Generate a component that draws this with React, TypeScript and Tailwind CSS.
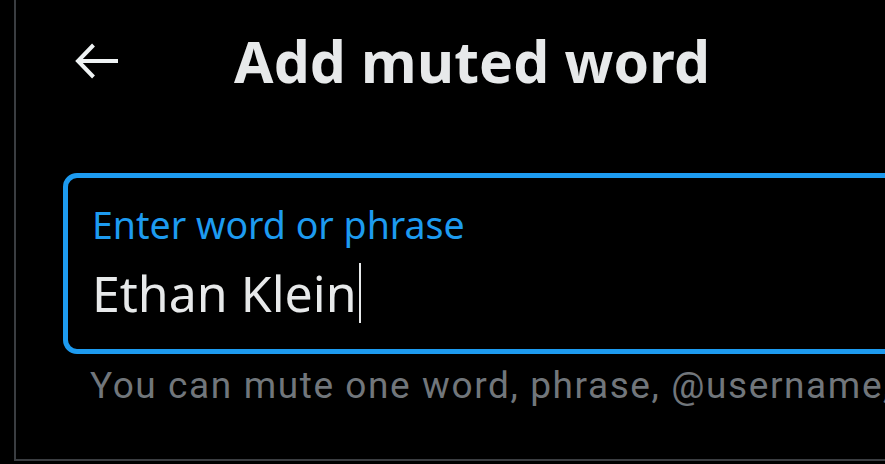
import React from "react";

const BackArrow: React.FC = () => (
  <svg width="46" height="38" viewBox="0 0 46 38" fill="none" className="shrink-0">
    <path
      d="M44 19H4.5M19.5 3L4 19L19.5 35"
      stroke="#eff3f4"
      strokeWidth="4"
      strokeLinecap="butt"
      strokeLinejoin="miter"
    />
  </svg>
);

const App: React.FC = () => {
  return (
    <div className="w-[885px] h-[464px] bg-black overflow-hidden">
      <div className="ml-[14px] w-[920px] h-[461px] border-l-2 border-b-2 border-[#3a3d41] flex flex-col">
        {/* Header */}
        <div className="h-[122px] flex items-center pl-[58px]">
          <BackArrow />
          <h1
            className="ml-[114px] text-[57px] leading-none font-bold text-[#e7e9ea] tracking-[0.2px]"
            style={{ fontFamily: '"Noto Sans", "Open Sans", sans-serif' }}
          >
            Add muted word
          </h1>
        </div>

        {/* Input */}
        <div className="mt-[51px] ml-[47px] w-[860px] h-[181px] border-[5px] border-[#1d9bf0] rounded-[14px] pl-[24px] pt-[25px]">
          <div
            className="text-[37.5px] leading-[44px] text-[#1d9bf0]"
            style={{ fontFamily: '"Noto Sans", "Open Sans", sans-serif' }}
          >
            Enter word or phrase
          </div>
          <div className="mt-[16px] h-[60px] flex items-center">
            <span
              className="text-[50px] leading-[60px] text-[#e7e9ea]"
              style={{ fontFamily: '"Noto Sans", "Open Sans", sans-serif' }}
            >
              Ethan Klein
            </span>
            <span className="w-[2px] h-[60px] bg-[#e7e9ea] ml-[2px]" />
          </div>
        </div>

        {/* Helper */}
        <p
          className="mt-[8px] ml-[74px] text-[37px] leading-[48px] tracking-[1.6px] text-[#71767b] whitespace-nowrap"
          style={{ fontFamily: "Roboto, sans-serif" }}
        >
          You can mute one word, phrase, @username, or hashtag at a time.
        </p>
      </div>
    </div>
  );
};

export default App;
